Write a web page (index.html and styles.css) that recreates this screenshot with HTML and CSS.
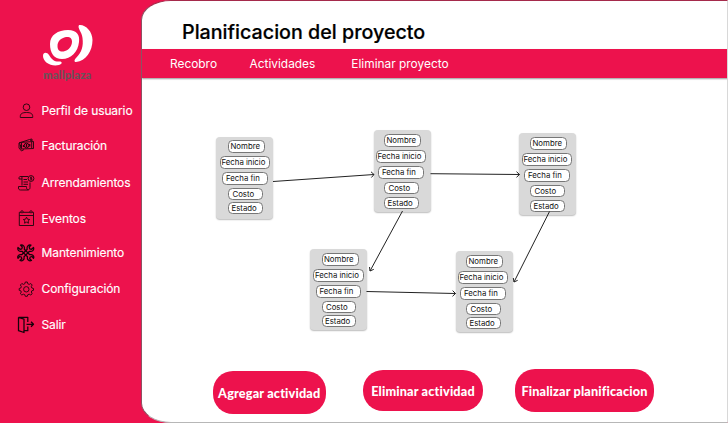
FILE: index.html
```html
<!DOCTYPE html>
<html lang="es">
<head>
<meta charset="utf-8">
<title>Planificacion del proyecto</title>
<link rel="stylesheet" href="styles.css">
</head>
<body>
<div class="app">
  <aside class="sidebar">
    <div class="brand">
      <svg class="brand-mark" width="52" height="45" viewBox="0 0 52 45">
        <path fill="#fff" fill-rule="evenodd" d="M7 20C7 11 15 6 25 6C34 6 37 11 36 18C35 28 28 35 19 35C11 35 7 29 7 20ZM14.500 22C14.500 27 18 28.500 22 27C26 26 29 22 29 17.500C29 13.500 26 12.500 23 13C18 14 14.500 17 14.500 22Z"/>
        <path fill="#fff" d="M36 1C42 0 49.500 7 49.500 16C49.500 27 43 37 33 38C31 38 31 36 33 34C39 28 40.500 22 39.500 14C39 8 34 4 36 1Z"/>
        <path fill="#fff" d="M0 32C0 28 4 28 6 31C9 36 12 38 16.500 37.500C19.500 37.500 19.500 40 16 41C8 43 0 38 0 32Z"/>
      </svg>
      <span class="brand-name">mallplaza</span>
    </div>
    <nav class="menu">
      <a class="item perfil"><svg viewBox="0 0 18 18"><circle cx="9.500" cy="5.200" r="3.300"/><path d="M3.300 15.500V14.500C3.300 11.500 5.500 10.500 9.500 10.500S15.700 11.500 15.700 14.500V15.500Z"/></svg>Perfil de usuario</a>
      <a class="item factura"><svg viewBox="0 0 18 18"><path d="M2 7L12.500 3.500L15 3V5M2 7V12L4.500 15L7 13.500M2.500 6.500L16.500 5.500V12.500L4 13ZM4.500 7V12.500M14.700 6V12M3 9L5 11M13 4L15 5"/><circle cx="9.500" cy="9.500" r="2.300"/><path d="M9.500 8V11M6.500 9V11M12.700 8V10.500" stroke-width="1.300"/></svg>Facturación</a>
      <a class="item arriendo"><svg viewBox="0 0 18 18"><path d="M5 11.500V4C5 2.500 4.500 2.500 3.500 2.500S2 3 2 4V5H5M3.500 2.500H11M13 8.500V13.500C13 15.500 11.500 16 10.500 15.500C9.500 15 9.500 14 9.500 12.500H1.500V14C1.500 15.500 2.500 16 3.500 16H11.500M6.500 5.500H10M6.500 8H11M6.500 10.300H11"/><circle cx="14" cy="4.500" r="2.900"/><path d="M15 3.300H13.500V4.500H14.800V5.800H13.200"/></svg>Arrendamientos</a>
      <a class="item eventos"><svg viewBox="0 0 18 18"><path d="M4 3.300H2.300V16.500H16.500V3.300H15M6 3.300H13M2.300 6.500H16.500"/><circle cx="5" cy="2.800" r="1.100"/><circle cx="14" cy="2.800" r="1.100"/><path d="M9.500 8.200L10.500 10.200L12.700 10.500L11.100 12L11.500 14.200L9.500 13.200L7.500 14.200L7.900 12L6.300 10.500L8.500 10.200Z"/></svg>Eventos</a>
      <a class="item manten"><svg class="strong" viewBox="0 0 18 18"><path d="M3.500 1L5.300 3L4.800 4.800L3 5.300L1 3.500C.2 6 2.200 8 5 7.300L10.500 12.800C9.800 15.500 12 17.500 14.500 16.500L12.700 14.700L13.200 13L15 12.500L16.500 14.300C17.500 12 15.500 10 12.800 10.700L7.300 5.200C8 2.500 6 .3 3.500 1ZM14 1L12.200 3L12.700 4.800L14.500 5.300L16.500 3.500C17.300 6 15.300 8 12.500 7.300L7 12.800C7.700 15.500 5.500 17.500 3 16.500L4.800 14.700L4.300 13L2.500 12.500L1 14.300C0 12 2 10 4.700 10.700L10.200 5.200C9.500 2.500 11.500 .3 14 1Z"/></svg>Mantenimiento</a>
      <a class="item config"><svg viewBox="0 0 18 18"><path d="M8.300 2H10.300L10.800 3.800L12.200 4.400L13.800 3.500L15.200 5L14.300 6.600L14.800 8L16.500 8.500V10.300L14.800 10.800L14.300 12L15.200 13.700L13.800 15L12.200 14.200L10.800 14.700L10.300 16.300H8.300L7.800 14.700L6.500 14.200L4.800 15L3.400 13.700L4.300 12L3.800 10.800L2.200 10.300V8.500L3.800 8L4.300 6.600L3.400 5L4.800 3.500L6.500 4.400L7.800 3.800Z"/><circle cx="9.300" cy="9.300" r="2.700"/></svg>Configuración</a>
      <a class="item salir"><svg class="strong" viewBox="0 0 18 18"><path d="M1.500 1.500L7 3.200V16.500L1.500 14.700ZM1.500 1.300H10.800V6M7 14.700H10.800V10.500M9.500 8.300H16.500M14 5.800L16.500 8.300L14 10.800"/></svg>Salir</a>
    </nav>
  </aside>

  <main class="panel">
    <h1 class="title">Planificacion del proyecto</h1>
    <nav class="tabs"><a>Recobro</a><a>Actividades</a><a>Eliminar proyecto</a></nav>

    <section class="board">
      <div class="node n1"><span class="nombre">Nombre</span><span class="inicio">Fecha inicio</span><span class="fin">Fecha fin</span><span class="costo">Costo</span><span class="estado">Estado</span></div>
      <div class="node n2"><span class="nombre">Nombre</span><span class="inicio">Fecha inicio</span><span class="fin">Fecha fin</span><span class="costo">Costo</span><span class="estado">Estado</span></div>
      <div class="node n3"><span class="nombre">Nombre</span><span class="inicio">Fecha inicio</span><span class="fin">Fecha fin</span><span class="costo">Costo</span><span class="estado">Estado</span></div>
      <div class="node n4"><span class="nombre">Nombre</span><span class="inicio">Fecha inicio</span><span class="fin">Fecha fin</span><span class="costo">Costo</span><span class="estado">Estado</span></div>
      <div class="node n5"><span class="nombre">Nombre</span><span class="inicio">Fecha inicio</span><span class="fin">Fecha fin</span><span class="costo">Costo</span><span class="estado">Estado</span></div>
      <svg class="links" viewBox="142 79 586 280" width="586" height="280">
        <path d="M273 181.500L374 174.500M371 171.800L374 174.500L371.400 177.500"/>
        <path d="M430.500 173.700L519.500 174.500M516.500 171.700L519.500 174.500L516.500 177.300"/>
        <path d="M402.500 211L370 271M369.500 267L370 271L373.800 269.300"/>
        <path d="M549.500 211.500L514 282M513.300 278L514 282L517.700 280.300"/>
        <path d="M366.500 291.500L455.500 293.500M452.600 290.600L455.500 293.500L452.500 296.300"/>
      </svg>
    </section>

    <div class="actions">
      <button class="agregar">Agregar actividad</button>
      <button class="eliminar">Eliminar actividad</button>
      <button class="finalizar">Finalizar planificacion</button>
    </div>
  </main>
</div>
</body>
</html>
```
FILE: styles.css
```css
* { box-sizing: border-box; }
body { margin: 0; font-family: Inter, "Liberation Sans", sans-serif; }
.app { display: flex; width: 728px; height: 423px; overflow: hidden; background: #ed124d; }

.sidebar { width: 141px; flex: none; color: #fff; }
.brand { display: flex; flex-direction: column; margin: 24px 0 0 43px; height: 77.500px; }
.brand-mark { display: block; flex: none; }
.brand-name { font: 900 11.300px/12px Lato, sans-serif; color: #6b5359; letter-spacing: .15px; }
.menu { display: flex; flex-direction: column; margin-left: 17px; }
.item { display: flex; align-items: center; height: 18px; font-size: 12px; letter-spacing: -.1px; white-space: nowrap; -webkit-text-stroke: .15px #fff; }
.item svg { width: 18px; height: 18px; flex: none; margin-right: 6.500px; fill: none; stroke: #26060f; stroke-width: .95; stroke-linejoin: round; }
.item .strong { stroke: #16020a; stroke-width: 1.250; }
.factura { margin-top: 16.500px; }
.arriendo { margin-top: 19.500px; }
.eventos { margin-top: 17.500px; }
.manten { margin-top: 16.500px; }
.config { margin-top: 18px; }
.salir { margin-top: 18px; }

.panel { flex: 1; display: flex; flex-direction: column; background: #fff; border: 1px solid #b7b7b7; border-top-color: #a52a4b; border-left-color: #8d5262; border-right-color: #d8d8d8; border-radius: 30px 0 0 30px / 20px 0 0 20px; overflow: hidden; }
.title { height: 48px; margin: 0; padding: 18px 0 0 40px; font-size: 19.700px; line-height: 26px; font-weight: 500; color: #000; white-space: nowrap; -webkit-text-stroke: .2px #000; }
.tabs { display: flex; align-items: center; flex: none; height: 29px; padding: 0 0 0 28px; margin-right: -1px; background: #ed124d; color: #fff; font-size: 11.900px; box-shadow: 0 1px 1.500px #0006; }
.tabs a { margin-right: 32.500px; white-space: nowrap; }
.tabs a:nth-child(2) { margin-right: 36px; }

.board { position: relative; height: 280px; flex: none; margin-top: 1px; }
.links { position: absolute; left: 0; top: 0; fill: none; stroke: #222; stroke-width: 1; }
.node { position: absolute; display: flex; flex-direction: column; width: 57px; height: 81.500px; border-radius: 4px; background: #d9d9d9; box-shadow: 0 1px 1.500px #0004; padding: 4px 0 0 3px; }
.node span { flex: none; display: block; border: 1px solid #777; border-radius: 4.500px; background: #fff; color: #111; font-size: 7.800px; line-height: 11px; height: 13px; white-space: nowrap; }
.node .nombre { width: 37px; margin-left: 8.500px; padding-left: 1.500px; }
.node .inicio { width: 50.500px; margin-top: 3px; padding-left: 1px; }
.node .fin { width: 45.500px; margin: 3px 0 0 2.500px; padding-left: 3px; }
.node .costo { width: 34.500px; height: 12px; margin: 3px 0 0 8.500px; padding-left: 3.500px; line-height: 10px; }
.node .estado { width: 34.500px; height: 12px; margin: 2.500px 0 0 8.500px; padding-left: 2.500px; line-height: 10px; }
.n1 { left: 73.500px; top: 58px; }
.node.n1 { padding: 2.500px 0 0 4px; }
.n2 { left: 231.500px; top: 51px; }
.node.n2 { padding-left: 2px; }
.n3 { left: 376.500px; top: 54px; }
.n4 { left: 167.500px; top: 169.500px; }
.node.n4 { padding-left: 3.500px; }
.n5 { left: 313.500px; top: 171.500px; }
.node.n5 { padding-left: 2px; }

.actions { display: flex; align-items: flex-start; padding: 10px 0 0 70.500px; }
.actions button { flex: none; border: 0; padding: 0; border-radius: 20px; background: #ed124d; color: #fff; font: 900 12.700px/16px Lato, sans-serif; letter-spacing: .16px; white-space: nowrap; }
.actions .agregar { width: 113.500px; height: 43px; margin-top: 2px; }
.actions .eliminar { width: 120px; height: 41px; margin: 1px 0 0 37px; }
.actions .finalizar { width: 139px; height: 43px; margin-left: 32px; }
```
